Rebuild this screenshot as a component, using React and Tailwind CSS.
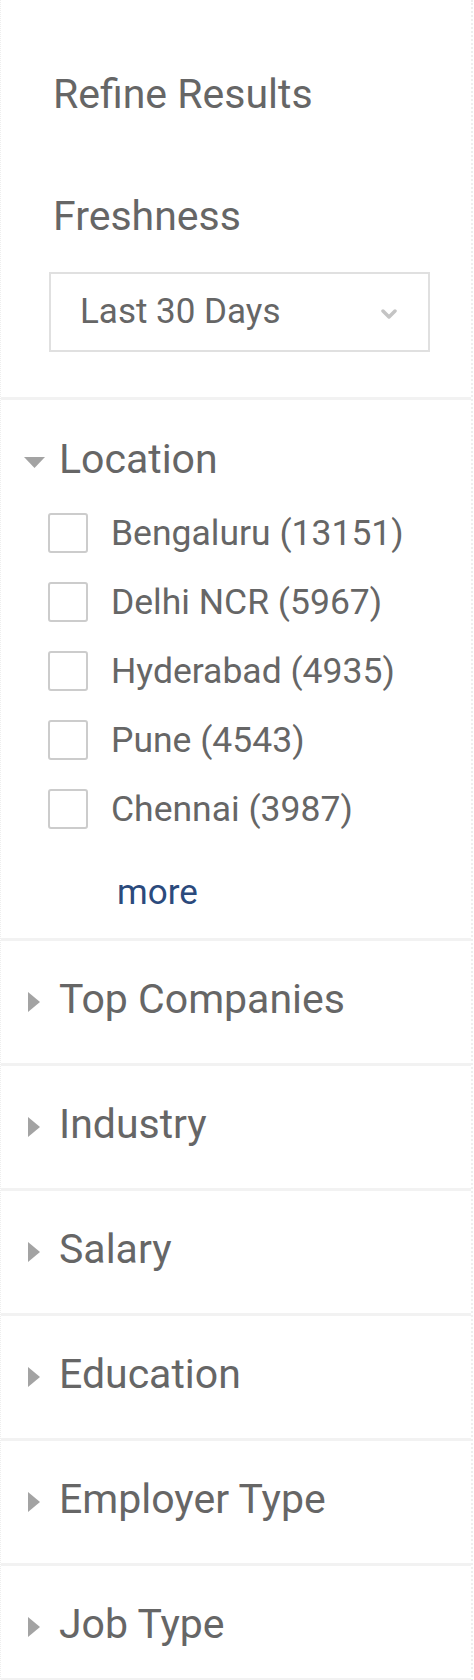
import React from 'react';

const locations = [
  'Bengaluru (13151)',
  'Delhi NCR (5967)',
  'Hyderabad (4935)',
  'Pune (4543)',
  'Chennai (3987)',
];

const collapsed = ['Top Companies', 'Industry', 'Salary', 'Education', 'Employer Type'];

function ArrowRight() {
  return (
    <svg width="12" height="20" viewBox="0 0 12 20">
      <polygon points="0,0 12,10 0,20" fill="#a3a3a3" />
    </svg>
  );
}

function ArrowDown() {
  return (
    <svg width="21" height="11" viewBox="0 0 21 11">
      <polygon points="0,0 21,0 10.5,11" fill="#a3a3a3" />
    </svg>
  );
}

function SectionHeader({ title, open }) {
  return (
    <div className="flex items-center pl-[21px] gap-[13px]">
      <div className="w-[24px] flex justify-center pt-[6px]">
        {open ? <ArrowDown /> : <ArrowRight />}
      </div>
      <h3 className="text-[41px] leading-[48px] text-[#666]">{title}</h3>
    </div>
  );
}

export default function App() {
  return (
    <div className="w-[473px] min-h-[1680px] bg-white border-l border-dotted border-[#eee] border-r-2 border-r-[#eeeeee] font-['Roboto','Liberation_Sans',sans-serif]">
      {/* Refine + freshness */}
      <div className="pt-[70px] pb-[45px] px-[48px] border-b-[3px] border-[#f2f2f2]">
        <h2 className="pl-[4px] text-[41px] leading-[48px] text-[#666]">Refine Results</h2>
        <h3 className="pl-[4px] mt-[74px] text-[41px] leading-[48px] text-[#666]">Freshness</h3>
        <div className="mt-[32px] h-[80px] w-[381px] border-2 border-[#e0e0e0] flex items-center justify-between pl-[29px] pr-[31px]">
          <span className="text-[35px] leading-[42px] text-[#666]">Last 30 Days</span>
          <svg width="16" height="11" viewBox="0 0 16 11" className="mt-[4px]">
            <polyline points="2,2 8,8 14,2" fill="none" stroke="#c4c4c4" strokeWidth="3.5" strokeLinecap="round" strokeLinejoin="round" />
          </svg>
        </div>
      </div>

      {/* Location */}
      <div className="pt-[35px] pb-[24px] border-b-[3px] border-[#f2f2f2]">
        <SectionHeader title="Location" open />
        <ul className="mt-[29px] pl-[47px] flex flex-col gap-[27px]">
          {locations.map((loc) => (
            <li key={loc} className="flex items-center gap-[23px]">
              <span className="w-[40px] h-[40px] border-2 border-[#cccccc] rounded-[3px] bg-white shrink-0" />
              <span className="text-[35.5px] leading-[42px] text-[#666]">{loc}</span>
            </li>
          ))}
        </ul>
        <a className="block mt-[42px] ml-[116px] text-[35px] leading-[42px] text-[#2b4a7c]">more</a>
      </div>

      {collapsed.map((t) => (
        <div key={t} className="pt-[34px] pb-[40px] border-b-[3px] border-[#f2f2f2]">
          <SectionHeader title={t} />
        </div>
      ))}

      <div className="pt-[34px] pb-[30px] border-b-[3px] border-[#f2f2f2]">
        <SectionHeader title="Job Type" />
      </div>
    </div>
  );
}
